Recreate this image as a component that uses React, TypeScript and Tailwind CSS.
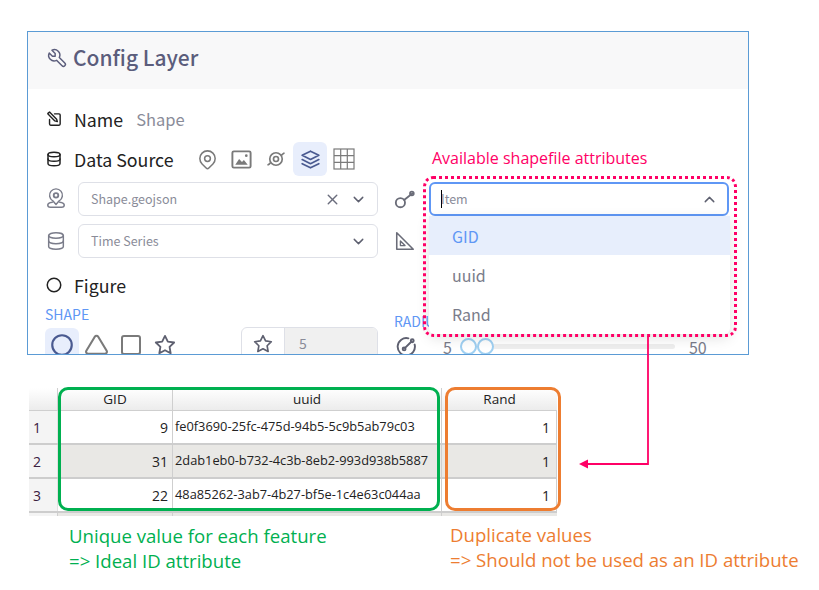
import React from "react";
import { TbTool, TbDatabase, TbStack2, TbMapPin, TbChevronDown, TbChevronUp, TbX, TbCircle, TbTriangle, TbSquare, TbStar } from "react-icons/tb";

const cjk = "font-['Noto_Sans_CJK_SC','Noto_Sans',sans-serif]";

type P = { className?: string };
const S = ({ className, children, vb = "0 0 24 24" }: P & { children: React.ReactNode; vb?: string }) => (
  <svg viewBox={vb} fill="none" stroke="currentColor" strokeWidth={2} strokeLinecap="round" strokeLinejoin="round" className={className}>{children}</svg>
);
const NameIcon = ({ className }: P) => (
  <S className={className}><path d="M12 4h6.500A1.500 1.500 0 0 1 20 5.500v13a1.500 1.500 0 0 1-1.500 1.500H6.500A1.500 1.500 0 0 1 5 18.500V12" /><path d="M3 3l2-1.500 10 10 1 3.500-3.500-1-10-10z" /></S>
);
const PhotoIcon = ({ className }: P) => (
  <S className={className}><rect x="2.500" y="3.500" width="19" height="17" rx="1.500" /><path d="M5.500 17.500l4-6 3 3 2-2 4 5z" fill="currentColor" stroke="none" /><circle cx="17" cy="8" r="1.400" fill="currentColor" stroke="none" /></S>
);
const StormIcon = ({ className }: P) => (
  <S className={className}><circle cx="12" cy="12" r="3" /><circle cx="12" cy="12" r="7.500" /><path d="M5 17c-.8.800-1.500 1.500-2.500 2M19 7c.8-.8 1.500-1.500 2.500-2" /></S>
);
const GridIcon = ({ className }: P) => (
  <svg viewBox="0 0 22 22" fill="none" stroke="currentColor" strokeWidth={1.200} className={className}><rect x="1" y="1" width="20" height="20" /><path d="M7.700 1v20M14.300 1v20M1 7.700h20M1 14.300h20" /></svg>
);
const PinBaseIcon = ({ className }: P) => (
  <S className={className}><circle cx="12" cy="8" r="2.500" /><path d="M12 18l-3.500-4a7 7 0 1 1 7 0z" strokeWidth={1.600} /><path d="M8 15.500c-3 .5-5 1.500-5 3 0 1.500 1 2.500 3 2.500h12c2 0 3-1 3-2.500 0-1.500-2-2.500-5-3" strokeWidth={1.600} /></S>
);
const KeyIcon = ({ className }: P) => (
  <S className={className}><circle cx="7" cy="16" r="5" /><path d="M11 13L20 6" /><circle cx="19.500" cy="6" r="2" /></S>
);
const RulerIcon = ({ className }: P) => (
  <S className={className}><path d="M3 3v18h18z" strokeWidth={1.700} /><path d="M7 12l5 5H7z" strokeWidth={1.500} /></S>
);
const GaugeIcon = ({ className }: P) => (
  <S className={className}><path d="M14 3.500a9 9 0 1 0 6.500 6.500" /><path d="M10.500 13.500L17 7" /><circle cx="9.500" cy="14.500" r="1.500" /><circle cx="18" cy="6" r="1.500" /></S>
);

const Select = ({ text, clear, open, className }: { text: string; clear?: boolean; open?: boolean; className?: string }) => (
  <div className={`flex h-[34px] items-center rounded-md bg-white ${open ? "border-2 border-[#5f97f5] pl-[10px] pr-[9px]" : "border border-[#dee0e7] pl-[12px] pr-[10px]"} ${className ?? ""}`}>
    {open && <span className="mr-[-1px] h-[18px] w-px bg-black" />}
    <span className="flex-1 text-[12.500px] text-[#8a8c99]">{text}</span>
    {clear && <TbX className="mr-[9px] h-[17px] w-[17px] text-[#6a6d7d]" />}
    {open ? <TbChevronUp className="h-[17px] w-[17px] text-[#5e6070]" /> : <TbChevronDown className="h-[17px] w-[17px] text-[#5e6070]" />}
  </div>
);

const Head = ({ w, t, last }: { w: string; t: string; last?: boolean }) => (
  <div className={`${w} flex h-[22px] items-center justify-center bg-gradient-to-b from-white to-[#ececec] ${last ? "" : "border-r border-[#cfcfcf]"} text-[13.500px] text-[#222]`}>{t}</div>
);

const rows = [
  ["1", "9", "fe0f3690-25fc-475d-94b5-5c9b5ab79c03", false],
  ["2", "31", "2dab1eb0-b732-4c3b-8eb2-993d938b5887", true],
  ["3", "22", "48a85262-3ab7-4b27-bf5e-1c4e63c044aa", false],
] as const;

export default function App() {
  return (
    <div className={`relative h-[590px] w-[819px] overflow-hidden bg-white ${cjk}`}>
      {/* Config panel */}
      <div className="absolute left-[27px] top-[31px] h-[324px] w-[722px] overflow-hidden border border-[#5b9bd5] bg-white">
        <div className="flex h-[57px] items-center bg-[#f8f8f9] pb-[5px] pl-[18px] text-[#5b5d7c]">
          <TbTool strokeWidth={1.600} className="mr-[5px] h-[22px] w-[22px]" />
          <span className="text-[21px] font-medium">Config Layer</span>
        </div>
        <div className="pl-[17px]">
          <div className="mt-[17px] flex h-[26px] items-center">
            <NameIcon className="ml-[1px] h-[17px] w-[17px] text-[#222]" />
            <span className="ml-[11px] text-[17.800px] text-[#222]">Name</span>
            <span className="ml-[13px] text-[16.500px] text-[#8a8c99]">Shape</span>
          </div>
          <div className="mt-[10px] flex h-[34px] items-center">
            <TbDatabase className="h-[18px] w-[18px] text-[#222]" />
            <span className="ml-[11px] w-[122px] text-[17.800px] text-[#222]">Data Source</span>
            <div className="flex items-center text-[#7a7a7a]">
              <TbMapPin strokeWidth={1.600} className="h-[23px] w-[23px]" />
              <PhotoIcon className="ml-[11px] h-[23px] w-[23px]" />
              <StormIcon className="ml-[13px] h-[20px] w-[20px]" />
              <div className="ml-[7px] flex h-[34px] w-[34px] items-center justify-center rounded-md bg-[#e8eefc]">
                <TbStack2 strokeWidth={1.600} className="h-[25px] w-[25px] text-[#4a5a90]" />
              </div>
              <GridIcon className="ml-[6px] h-[22px] w-[22px]" />
            </div>
          </div>
          <div className="mt-[6px] flex">
            <div className="w-[333px]">
              <div className="flex items-center">
                <PinBaseIcon className="h-[24px] w-[22px] text-[#7a7c8a]" />
                <Select text="Shape.geojson" clear className="ml-[11px] flex-1" />
              </div>
              <div className="mt-[8px] flex items-center">
                <TbDatabase strokeWidth={1.600} className="h-[24px] w-[22px] text-[#7a7c8a]" />
                <Select text="Time Series" className="ml-[11px] flex-1" />
              </div>
            </div>
            <div className="ml-[16px] w-[335px]">
              <div className="flex items-center">
                <KeyIcon className="h-[22px] w-[22px] text-[#6a6c78]" />
                <Select text="Item" open className="ml-[13px] flex-1" />
              </div>
              <div className="mt-[8px] flex h-[34px] items-center">
                <RulerIcon className="h-[22px] w-[22px] text-[#6a6c78]" />
              </div>
            </div>
          </div>
          <div className="mt-[14px] flex h-[26px] items-center">
            <TbCircle className="h-[18px] w-[18px] text-[#222]" />
            <span className="ml-[11px] text-[17.800px] text-[#222]">Figure</span>
          </div>
          <div className="mt-[6px] flex">
            <div className="w-[333px]">
              <div className="text-[14px] leading-[20px] text-[#5f97f5]">SHAPE</div>
              <div className="mt-[3px] flex items-center">
                <div className="flex h-[34px] w-[34px] items-center justify-center rounded-md bg-[#e8eefc]">
                  <TbCircle className="h-[26px] w-[26px] text-[#4a5a90]" />
                </div>
                <TbTriangle className="ml-[5px] h-[25px] w-[25px] text-[#7a7a7a]" />
                <TbSquare className="ml-[10px] h-[24px] w-[24px] text-[#7a7a7a]" />
                <TbStar className="ml-[11px] h-[22px] w-[22px] text-[#5e6070]" />
                <div className="ml-[65px] flex h-[36px] w-[137px] overflow-hidden rounded-md border border-[#dee0e7]">
                  <div className="flex w-[43px] items-center justify-center border-r border-[#dee0e7] pb-[3px]">
                    <TbStar className="h-[20px] w-[20px] text-[#5e6070]" />
                  </div>
                  <div className="flex-1 bg-[#f0f0f0] pl-[14px] pt-[5px] text-[14px] text-[#8a8c99]">5</div>
                </div>
              </div>
            </div>
            <div className="ml-[16px] flex-1 pt-[7px]">
              <div className="text-[14px] leading-[20px] text-[#5f97f5]">RADIUS</div>
              <div className="mt-[4px] flex h-[23px] items-center">
                <GaugeIcon className="ml-[1px] h-[23px] w-[23px] text-[#5e6070]" />
                <span className="ml-[25px] text-[16px] leading-[14px] text-[#7a7c8a]">5</span>
                <div className="relative ml-[8px] h-[5px] w-[215px] rounded-full bg-[#eeeeee]">
                  <span className="absolute left-0 top-[-6px] h-[17px] w-[17px] rounded-full border-2 border-[#9fd0f2] bg-white" />
                  <span className="absolute left-[17px] top-[-6px] h-[17px] w-[17px] rounded-full border-2 border-[#9fd0f2] bg-white" />
                </div>
                <span className="ml-[14px] text-[16px] leading-[14px] text-[#7a7c8a]">50</span>
              </div>
            </div>
          </div>
        </div>
      </div>

      {/* Open dropdown list */}
      <div className="absolute left-[429px] top-[216px] w-[301px] overflow-hidden rounded-b-md bg-white pb-[2px] text-[16px] shadow-[0_4px_14px_rgba(0,0,0,0.12)]">
        <div className="flex h-[39px] items-center bg-[#e7eefc] pl-[23px] text-[#5f97f5]">GID</div>
        <div className="flex h-[40px] items-center pl-[23px] text-[#7a7c8a]">uuid</div>
        <div className="flex h-[37px] items-center pl-[23px] text-[#7a7c8a]">Rand</div>
      </div>

      {/* Attributes table */}
      <div className="absolute left-[29px] top-[388px] w-[528px] font-['Open_Sans',sans-serif] text-[14px] text-[#222]">
        <div className="flex border-b border-[#cfcfcf]">
          <Head w="w-[29px]" t="" />
          <Head w="w-[115px]" t="GID" />
          <Head w="w-[269px]" t="uuid" />
          <Head w="w-[115px]" t="Rand" last />
        </div>
        {rows.map(([n, id, uuid, alt]) => (
          <div key={n} className={`flex h-[34px] border-b-2 border-[#cdcdcd] ${alt ? "bg-[#e9e8e5]" : "bg-white"}`}>
            <div className="flex w-[29px] items-center border-r border-[#e0e0e0] bg-[#f4f4f4] pl-[4px] text-[14px] text-[#3a2040]">{n}</div>
            <div className="flex w-[115px] items-center justify-end border-r border-[#cfcfcf] pr-[4px]">{id}</div>
            <div className="flex w-[269px] items-center border-r border-[#cfcfcf] pl-[2px] text-[12.800px]">{uuid}</div>
            <div className="flex w-[115px] items-center justify-end border-r border-[#cfcfcf] pr-[6px]">1</div>
          </div>
        ))}
        <div className="flex h-[3px] bg-[#e9e8e5]">
          <div className="w-[29px] border-r border-[#cfcfcf] bg-[#f4f4f4]" />
          <div className="w-[115px] border-r border-[#cfcfcf]" />
          <div className="w-[269px] border-r border-[#cfcfcf]" />
        </div>
      </div>

      {/* Annotations */}
      <div className="absolute left-[432px] top-[148px] font-['Open_Sans',sans-serif] text-[16px] leading-[20px] text-[#ff0066]">Available shapefile attributes</div>
      <div className="absolute left-[423px] top-[176px] h-[161px] w-[314px] rounded-[10px] border-[3px] border-dotted border-[#ff0066]" />
      <svg className="absolute left-[570px] top-[330px]" width="90" height="145" viewBox="0 0 90 145" fill="none">
        <path d="M78 6V134H14" stroke="#ff0066" strokeWidth={1.800} />
        <path d="M9 134l9-4.500v9z" fill="#ff0066" />
      </svg>
      <div className="absolute left-[58px] top-[387px] h-[124px] w-[382px] rounded-[10px] border-[3px] border-[#00b050]" />
      <div className="absolute left-[445px] top-[387px] h-[124px] w-[116px] rounded-[10px] border-[3px] border-[#ed7d31]" />
      <div className="absolute left-[69px] top-[523px] font-['Open_Sans',sans-serif] text-[18.600px] leading-[25px] text-[#00b050]">
        <div>Unique value for each feature</div>
        <div>=&gt; Ideal ID attribute</div>
      </div>
      <div className="absolute left-[450px] top-[522px] font-['Open_Sans',sans-serif] text-[18.600px] leading-[25px] text-[#ed7d31]">
        <div>Duplicate values</div>
        <div>=&gt; Should not be used as an ID attribute</div>
      </div>
    </div>
  );
}
